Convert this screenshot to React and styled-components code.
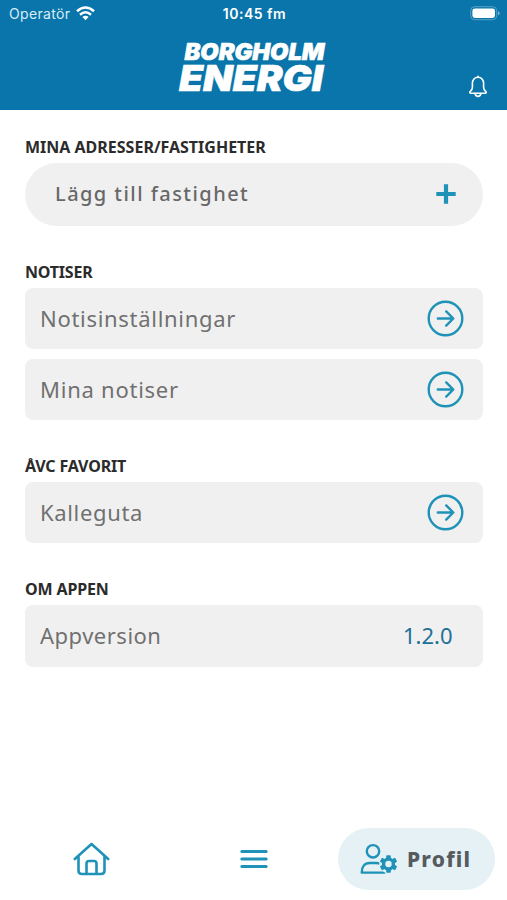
import styled, { createGlobalStyle } from "styled-components";

const sections = [
  {
    title: "Notiser",
    spacing: "-0.2px",
    rows: [
      { label: "Notisinställningar", spacing: "0.7px" },
      { label: "Mina notiser", spacing: "0.75px" },
    ],
  },
  {
    title: "ÅVC favorit",
    spacing: "-0.15px",
    rows: [{ label: "Kalleguta", spacing: "0.65px" }],
  },
  {
    title: "Om appen",
    spacing: "-0.15px",
    rows: [{ label: "Appversion", spacing: "0.5px", value: "1.2.0" }],
  },
];

export default function App() {
  return (
    <>
      <GlobalStyle />
      <Screen>
        <Header>
          <StatusBar>
            <Carrier>
              Operatör
              <WifiIcon />
            </Carrier>
            <Time>10:45 fm</Time>
            <BatteryIcon />
          </StatusBar>
          <Brand>
            <Logo />
            <BellButton aria-label="Notiser">
              <BellIcon />
            </BellButton>
          </Brand>
        </Header>
        <Content>
          <Section>
            <SectionTitle $spacing="0">Mina adresser/fastigheter</SectionTitle>
            <AddButton>
              Lägg till fastighet
              <PlusIcon />
            </AddButton>
          </Section>
          {sections.map(({ title, spacing, rows }) => (
            <Section key={title}>
              <SectionTitle $spacing={spacing}>{title}</SectionTitle>
              <RowList>
                {rows.map((row) => (
                  <Row key={row.label}>
                    <RowLabel $spacing={row.spacing}>{row.label}</RowLabel>
                    {row.value ? (
                      <RowValue>{row.value}</RowValue>
                    ) : (
                      <ArrowIcon />
                    )}
                  </Row>
                ))}
              </RowList>
            </Section>
          ))}
        </Content>
        <Navigation>
          <NavItem aria-label="Hem">
            <HomeIcon />
          </NavItem>
          <NavItem aria-label="Meny">
            <MenuIcon />
          </NavItem>
          <ActiveNavItem>
            <ProfileIcon />
            Profil
          </ActiveNavItem>
        </Navigation>
      </Screen>
    </>
  );
}

function Logo() {
  return (
    <LogoSvg width="150" height="54" viewBox="0 0 150 54">
      <text x="6.5" y="20.7" fontSize="22.6" textLength="140" lengthAdjust="spacingAndGlyphs">
        BORGHOLM
      </text>
      <text x="1" y="52.4" fontSize="35.8" textLength="144" lengthAdjust="spacingAndGlyphs">
        ENERGI
      </text>
    </LogoSvg>
  );
}

function WifiIcon() {
  return (
    <svg width="19" height="15" viewBox="0 0 19 15" fill="none" stroke="#fff" strokeWidth="2.5">
      <path d="M1 5.2Q9.5-2.2 18 5.2" />
      <path d="M4 8.7Q9.5 3.9 15 8.7" />
      <path d="M6.4 11.1Q9.5 8.6 12.6 11.1L9.5 14.2Z" fill="#fff" stroke="none" />
    </svg>
  );
}

function BatteryIcon() {
  return (
    <svg width="30" height="15" viewBox="0 0 30 15">
      <rect x=".7" y=".7" width="26" height="13" rx="4" fill="none" stroke="#5ba0c5" />
      <rect x="2.4" y="2.4" width="22.6" height="9.6" rx="2.4" fill="#fff" />
      <path d="M28 5v4.5q1.6-.6 1.6-2.2T28 5Z" fill="#7db3d1" />
    </svg>
  );
}

function BellIcon() {
  return (
    <svg width="20" height="23" viewBox="0 0 20 23" fill="none" stroke="#fff" strokeWidth="1.6" strokeLinecap="round" strokeLinejoin="round">
      <path d="M10 2.3C6.6 2.3 4.4 4.9 4.4 8.3v4.3c0 1.6-.7 2.4-1.9 3.5-1.2 1-.8 2.1.4 2.1h14.2c1.2 0 1.6-1.1.4-2.1-1.2-1.1-1.9-1.9-1.9-3.5V8.3c0-3.4-2.2-6-5.6-6Z" />
      <path d="M10 2.2V1.2M7.1 18.6c.3 1.9 1.4 2.8 2.9 2.8s2.6-.9 2.9-2.8" />
    </svg>
  );
}

function PlusIcon() {
  return (
    <svg width="20" height="20" viewBox="0 0 20 20" stroke="#1f92b8" strokeWidth="4.2" strokeLinejoin="round">
      <path d="M10 .3v19.4M.3 10h19.4" />
    </svg>
  );
}

function ArrowIcon() {
  return (
    <svg width="37" height="37" viewBox="0 0 37 37" fill="none" stroke="#1f92b8" strokeWidth="2.4" strokeLinecap="round" strokeLinejoin="round">
      <circle cx="18.5" cy="18.5" r="16.8" />
      <path d="M10.8 18.5h15.4M19.2 11.4l7.1 7.1-7.1 7.1" />
    </svg>
  );
}

function HomeIcon() {
  return (
    <svg width="38" height="34" viewBox="0 0 38 34" fill="none" stroke="#1f92b8" strokeWidth="2.6" strokeLinecap="round" strokeLinejoin="round">
      <path d="M1.8 17 18.5 2l16.7 15M5.5 14v14.5q0 3.5 3.5 3.5h19q3.5 0 3.5-3.5V14" />
      <path d="M13.5 31.5v-10q0-2.5 2.5-2.5h5q2.5 0 2.5 2.5v10" />
    </svg>
  );
}

function MenuIcon() {
  return (
    <svg width="28" height="20" viewBox="0 0 28 20" stroke="#1f92b8" strokeWidth="3" strokeLinecap="round">
      <path d="M1.8 2.6h24.4M1.8 10h24.4M1.8 17.4h24.4" />
    </svg>
  );
}

function ProfileIcon() {
  const teeth = [0, 60, 120, 180, 240, 300];

  return (
    <svg width="38" height="32" viewBox="0 0 38 32" fill="none" stroke="#1f92b8">
      <circle cx="13" cy="8.3" r="6.2" strokeWidth="2.4" />
      <path d="M24.5 29.6H1.7c0-5.7 2.8-9.6 8-9.6h6.6q1.8 0 3.2.6" strokeWidth="2.4" strokeLinejoin="round" strokeLinecap="round" />
      <circle cx="28.5" cy="21" r="9.3" fill="#e5f1f4" stroke="none" />
      <circle cx="28.5" cy="21" r="4.9" strokeWidth="3.4" />
      {teeth.map((angle) => (
        <rect
          key={angle}
          x="26.2"
          y="12.2"
          width="4.6"
          height="4"
          rx=".8"
          fill="#1f92b8"
          stroke="none"
          transform={`rotate(${angle} 28.5 21)`}
        />
      ))}
    </svg>
  );
}

const GlobalStyle = createGlobalStyle`
  * {
    box-sizing: border-box;
  }

  body {
    margin: 0;
    background-color: #fff;
    font-family: "Noto Sans", sans-serif;
  }

  button {
    border: none;
    background: none;
    padding: 0;
    font: inherit;
  }

  svg {
    display: block;
    flex-shrink: 0;
  }
`;

const Screen = styled.div`
  width: 507px;
  height: 900px;
  display: flex;
  flex-direction: column;
  overflow: hidden;
`;

const Header = styled.header`
  height: 109.5px;
  flex-shrink: 0;
  background-color: #0975aa;
  color: #fff;
`;

const StatusBar = styled.div`
  height: 27px;
  padding: 0 7px 0 9px;
  display: grid;
  grid-template-columns: 1fr auto 1fr;
  align-items: center;
  font-family: Inter, sans-serif;
  font-size: 14px;

  > svg {
    justify-self: end;
  }
`;

const Carrier = styled.div`
  display: flex;
  align-items: center;
  gap: 6px;
  color: #d9edf7;
  letter-spacing: 0.35px;
`;

const Time = styled.time`
  font-weight: 600;
  letter-spacing: 0.5px;
`;

const Brand = styled.div`
  height: 82px;
  padding: 12px 19px 0 178px;
  display: flex;
  justify-content: space-between;
`;

const LogoSvg = styled.svg`
  overflow: visible;
  fill: #fff;
  stroke: #fff;
  stroke-width: 0.6px;
  font-family: Inter, sans-serif;
  font-weight: 900;
  font-style: italic;
`;

const BellButton = styled.button`
  align-self: flex-end;
  margin-bottom: 11px;
`;

const Content = styled.main`
  padding: 27px 24.5px 0 25px;
  display: flex;
  flex-direction: column;
  gap: 36px;
`;

const Section = styled.section`
  display: flex;
  flex-direction: column;
  gap: 6px;
`;

const SectionTitle = styled.h2`
  margin: 0;
  color: #2b2b2b;
  font-size: 16px;
  font-weight: 700;
  line-height: 20.2px;
  letter-spacing: ${({ $spacing }) => $spacing};
  text-transform: uppercase;
`;

const AddButton = styled.button`
  && {
    height: 63px;
    padding: 0 27px 1px 30px;
    border-radius: 32px;
    background-color: #f0f0f0;
    display: flex;
    align-items: center;
    justify-content: space-between;
    color: #686868;
    font-size: 20px;
    font-weight: 500;
    letter-spacing: 1.45px;
  }
`;

const RowList = styled.div`
  display: flex;
  flex-direction: column;
  gap: 9.5px;
`;

const Row = styled.div`
  height: 61.2px;
  padding: 0 18.5px 0 15px;
  border-radius: 8px;
  background-color: #f0f0f0;
  display: flex;
  align-items: center;
  justify-content: space-between;
`;

const RowLabel = styled.span`
  color: #707070;
  font-size: 22px;
  font-weight: 400;
  line-height: 30px;
  padding-bottom: 1px;
  letter-spacing: ${({ $spacing }) => $spacing};
`;

const RowValue = styled.span`
  margin-right: 11.5px;
  padding-bottom: 1px;
  color: #1c6f97;
  font-size: 22px;
  line-height: 30px;
`;

const Navigation = styled.nav`
  margin-top: auto;
  padding: 0 12px 10px 73px;
  display: grid;
  grid-template-columns: 167px 98px 157px;
  align-items: center;
`;

const NavItem = styled.button`
  display: flex;
`;

const ActiveNavItem = styled.button`
  && {
    width: 157px;
    height: 62px;
    padding-left: 22px;
    border-radius: 31px;
    background-color: #e5f1f4;
    display: flex;
    align-items: center;
    gap: 9px;
    color: #555b5f;
    font-size: 21px;
    font-weight: 800;
    letter-spacing: 1.2px;
  }
`;
